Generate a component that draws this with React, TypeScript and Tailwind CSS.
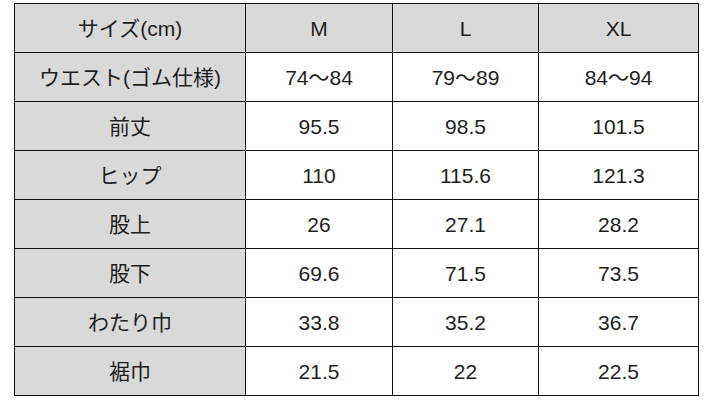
const header = ["サイズ(cm)", "M", "L", "XL"];

const rows: [string, string, string, string][] = [
  ["ウエスト(ゴム仕様)", "74〜84", "79〜89", "84〜94"],
  ["前丈", "95.5", "98.5", "101.5"],
  ["ヒップ", "110", "115.6", "121.3"],
  ["股上", "26", "27.1", "28.2"],
  ["股下", "69.6", "71.5", "73.5"],
  ["わたり巾", "33.8", "35.2", "36.7"],
  ["裾巾", "21.5", "22", "22.5"],
];

const cell = "border border-[#111] h-[49px] p-0 text-center align-middle";

export default function App() {
  return (
    <div className="h-[401px] w-[712px] bg-white pl-[14px] pt-[3px] font-['Liberation_Sans','Noto_Sans_CJK_JP',sans-serif] text-[21px] leading-none text-[#1e1e1e]">
      <table className="w-[684px] table-fixed border-collapse">
        <colgroup>
          <col className="w-[231px]" />
          <col className="w-[147px]" />
          <col className="w-[146px]" />
          <col className="w-[160px]" />
        </colgroup>
        <thead>
          <tr>
            {header.map((h) => (
              <th key={h} className={`${cell} bg-[#d9d9d9] font-normal`}>
                {h}
              </th>
            ))}
          </tr>
        </thead>
        <tbody>
          {rows.map(([label, m, l, xl]) => (
            <tr key={label}>
              <td className={`${cell} bg-[#d9d9d9]`}>{label}</td>
              <td className={cell}>{m}</td>
              <td className={cell}>{l}</td>
              <td className={cell}>{xl}</td>
            </tr>
          ))}
        </tbody>
      </table>
    </div>
  );
}
